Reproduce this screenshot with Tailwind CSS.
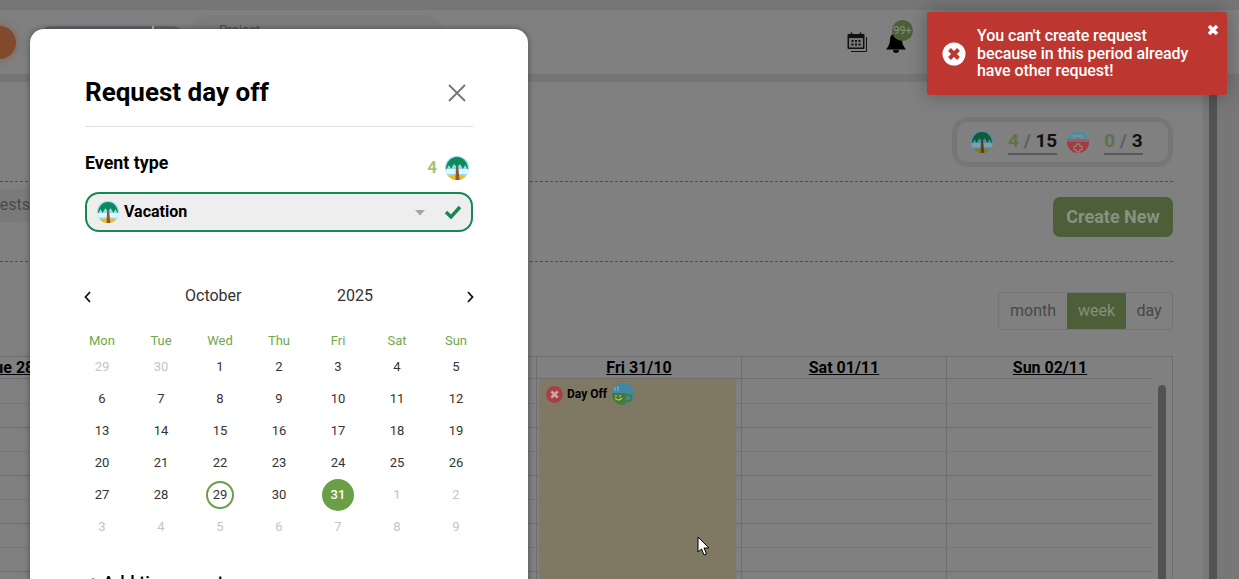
<!DOCTYPE html>
<html>
<head>
<meta charset="utf-8">
<script src="https://cdn.jsdelivr.net/npm/@tailwindcss/browser@4"></script>
</head>
<body class="m-0 font-['Roboto',sans-serif]">
<div class="relative w-[1239px] h-[579px] overflow-hidden bg-[#808080]">

  <!-- dimmed page: header -->
  <div class="h-[10px] bg-[#767676]"></div>
  <div class="h-[64px] bg-[#808080] flex items-center relative">
    <div class="w-[33px] h-[33px] rounded-full bg-[#824a2c] shadow-[0_0_8px_rgba(130,74,44,0.6)] -ml-[17px]"></div>
    <div class="absolute left-[37px] top-[16px] w-[150px] h-[30px] rounded-full bg-[#63656c]">
      <div class="absolute left-[115px] top-0 w-[2px] h-[30px] bg-[#b5b5b5]"></div>
    </div>
    <div class="absolute left-[190px] top-[5px] w-[254px] h-[50px] rounded-[20px] bg-[#7b7b7b]">
      <span class="absolute left-[29px] top-[7px] text-[13px] leading-[15px] text-[#4c4c4c]">Project</span>
    </div>
    <div class="ml-auto flex items-center mr-[333px] gap-[19px]">
      <svg width="20" height="20" viewBox="0 0 20 20"><rect x="0.500" y="2" width="17" height="15" fill="#111" rx="1"/><rect x="2" y="6" width="14" height="9.500" fill="#777"/><path d="M4.500 0.500v3M13.500 0.500v3" stroke="#111" stroke-width="1.500"/><path d="M4.500 8h2v2h-2zM8 8h2v2H8zM11.500 8h2v2h-2zM4.500 11.500h2v2h-2zM8 11.500h2v2H8zM11.500 11.500h2v2h-2z" fill="#111"/><path d="M19.500 5v14.500H4" fill="none" stroke="#111" stroke-width="1"/></svg>
      <div class="relative w-[20px] h-[20px] mt-[2px]">
        <svg width="20" height="20" viewBox="0 0 20 20" class="absolute left-0 top-0"><path d="M10 0c3.500 0 6 3 6 6.500 0 4.500 1.500 7 4 10H0c2.500-3 4-5.500 4-10C4 3 6.500 0 10 0z" fill="#000"/><path d="M7 17h6a3 3 0 0 1-6 0z" fill="#000"/></svg>
        <div class="absolute left-[6px] -top-[13px] w-[21px] h-[21px] rounded-full bg-[#4d5f38] flex items-center justify-center text-[11px] leading-[21px] text-[#879280] whitespace-nowrap">99+</div>
      </div>
    </div>
  </div>
  <div class="h-[8px] bg-[#767676]"></div>

  <!-- right page gutter and scrollbar -->
  <div class="absolute left-[1203px] right-0 top-[82px] bottom-0 bg-[#777777] pl-[6px]">
    <div class="w-[8px] h-full bg-[#525252]"></div>
  </div>

  <!-- dimmed page: content -->
  <div class="ml-[-30px] w-[1203px] pt-[35px]">
    <div class="flex justify-end h-[50px]">
      <div class="flex items-center w-[221px] h-[50px] rounded-[16px] border-[5px] border-[#767676] pl-[14px] text-[19px] font-bold text-[#111]">
        <svg width="22" height="22" viewBox="0 0 24 24"><defs><clipPath id="pa"><circle cx="12" cy="12" r="12"/></clipPath></defs><g clip-path="url(#pa)"><rect width="24" height="24" fill="#4d8da0"/><rect y="13" width="24" height="5" fill="#7fa0a8"/><ellipse cx="12" cy="24" rx="13" ry="5" fill="#94790f"/></g><path d="M11 8h2l1.500 16h-4z" fill="#5a3d2c"/><path d="M1 14C1 6 6 1 12 1s11 5 11 13l-3-5-2 4-3-5-3 3-3-3-3 5-2-4z" fill="#0b5c3d"/></svg>
        <span class="ml-[15px] mt-[1px] border-b-[2px] border-[#595959] leading-[22px] pb-[1px]"><span class="text-[#5f7249]">4</span><span class="text-[#56606a]"> / </span>15</span>
        <svg width="22" height="22" viewBox="0 0 22 22" class="ml-[10px]"><defs><clipPath id="pb"><circle cx="11" cy="11" r="11"/></clipPath></defs><g clip-path="url(#pb)"><rect width="22" height="22" fill="#4d8da0"/><path d="M7 8V5h8v3" fill="none" stroke="#8a8a8a" stroke-width="2"/><rect x="0" y="8" width="22" height="14" rx="3" fill="#a43a3c"/><rect x="0" y="8" width="22" height="3" fill="#8a6468"/><path d="M11 12.500v9M6.500 17h9" stroke="#8f8f8f" stroke-width="4.500"/><path d="M11 13.500v7M7.500 17h7" stroke="#a43a3c" stroke-width="2.500"/></g></svg>
        <span class="ml-[15px] mt-[1px] border-b-[2px] border-[#595959] leading-[22px] pb-[1px]"><span class="text-[#5f7249]">0</span><span class="text-[#56606a]"> / </span>3</span>
      </div>
    </div>
    <div class="mt-[14px] border-t border-dashed border-[#4d4d4d] h-[80px] flex items-start justify-between">
      <div class="mt-[7px] w-[60px] h-[33px] bg-[#7a7a7a] text-[#4a4a4a] text-[16px] leading-[31px] text-right overflow-hidden">ests</div>
      <div class="mt-[15px] w-[120px] h-[40px] pb-[2px] rounded-[7px] bg-[#4d5f38] text-[#879280] text-[18px] font-bold flex items-center justify-center">Create New</div>
    </div>
    <div class="border-t border-dashed border-[#4d4d4d] h-[31px]"></div>
    <div class="flex justify-end">
      <div class="flex h-[38px] rounded-[4px] border border-[#747474] text-[16px] text-[#484848] leading-[36px]">
        <div class="w-[68px] text-center">month</div>
        <div class="w-[59px] text-center bg-[#4d5f38] text-[#858f7c]">week</div>
        <div class="w-[46px] text-center">day</div>
      </div>
    </div>
    <!-- calendar week view -->
    <div class="relative mt-[26px] ml-[30px] border-t border-r border-[#6e6e6e] h-[230px]">
      <div class="flex h-[22px] border-b border-[#6e6e6e] text-[16px] font-bold text-black leading-[21px] underline w-[1153px]">
        <div class="w-[61px] text-left overflow-hidden whitespace-nowrap -ml-[15px] flex-none">Tue 28/10</div>
        <div class="flex-1"></div>
        <div class="w-[205px] text-center border-l border-[#6e6e6e] flex-none">Fri 31/10</div>
        <div class="w-[205px] text-center border-l border-[#6e6e6e] flex-none">Sat 01/11</div>
        <div class="w-[207px] text-center border-l border-[#6e6e6e] flex-none">Sun 02/11</div>
      </div>
      <div class="w-[1153px]">
        <div class="h-[25px] border-b border-dotted border-[#6e6e6e]"></div>
        <div class="h-[24px] border-b border-[#6e6e6e]"></div>
        <div class="h-[24px] border-b border-dotted border-[#6e6e6e]"></div>
        <div class="h-[24px] border-b border-[#6e6e6e]"></div>
        <div class="h-[24px] border-b border-dotted border-[#6e6e6e]"></div>
        <div class="h-[24px] border-b border-[#6e6e6e]"></div>
        <div class="h-[24px] border-b border-dotted border-[#6e6e6e]"></div>
        <div class="h-[24px] border-b border-[#6e6e6e]"></div>
      </div>
      <div class="absolute left-[741px] top-0 bottom-0 w-px bg-[#6e6e6e]"></div>
      <div class="absolute left-[946px] top-0 bottom-0 w-px bg-[#6e6e6e]"></div>
      <div class="absolute left-[536px] top-0 bottom-0 w-px bg-[#6e6e6e]"></div>
      <div class="absolute left-[1158px] top-[28px] bottom-0 w-[8px] rounded-t-[4px] bg-[#525252]"></div>
      <div class="absolute left-[539px] top-[22px] w-[197px] h-[210px] bg-[#7f7963] flex items-start pt-[7px] pl-[7px]">
        <svg width="17" height="17" viewBox="0 0 16 16"><circle cx="8" cy="8" r="8" fill="#a54048"/><path d="M5 5l6 6M11 5l-6 6" stroke="#cfa9a9" stroke-width="2.400"/></svg>
        <span class="ml-[4px] text-[12px] leading-[17px] font-bold text-black">Day Off</span>
        <svg width="22" height="22" viewBox="0 0 22 22" class="ml-[5px] -mt-[3px]"><defs><clipPath id="cf"><circle cx="11" cy="11" r="11"/></clipPath></defs><g clip-path="url(#cf)"><rect width="22" height="22" fill="#3f88a6"/><path d="M0 10h14v8a4 4 0 0 1-4 4H0z" fill="#4c7a2c"/><path d="M14 12h2.500a2.500 2.500 0 0 1 0 6H14" fill="none" stroke="#4c7a2c" stroke-width="2"/><path d="M3 15q3 4 7 0" fill="none" stroke="#a8c890" stroke-width="1.200"/><path d="M4 12v2M8 12v2" stroke="#a8c890" stroke-width="1.200"/><path d="M3 4v4M6 3v5" stroke="#8fb8c8" stroke-width="1"/></g></svg>
      </div>
    </div>
  </div>

  <!-- mouse cursor -->
  <svg width="14" height="20" viewBox="0 0 14 20" class="absolute left-[697px] top-[536px]"><path d="M1 1v15l3.500-3 2.500 6 2.500-1-2.500-6h5z" fill="#fff" stroke="#000" stroke-width="1"/></svg>

  <!-- modal -->
  <div class="absolute left-[30px] top-[29px] w-[498px] h-[600px] bg-white rounded-[14px] shadow-[0_0_6px_rgba(0,0,0,0.4)] px-[55px]">
    <div class="flex items-center justify-between h-[98px] border-b border-[#dfdfe8] pt-[28px]">
      <h2 class="text-[26px] leading-[30px] font-bold text-black">Request day off</h2>
      <svg width="18" height="18" viewBox="0 0 18 18" class="mr-[7px] mt-[2px]"><path d="M1 1l16 16M17 1L1 17" stroke="#757575" stroke-width="1.800"/></svg>
    </div>
    <div class="flex justify-between items-start h-[65px] pt-[26px]">
      <span class="text-[17.800px] leading-[20px] font-bold text-black">Event type</span>
      <div class="flex items-center gap-[8px] mr-[4px] pt-[2px]">
        <span class="text-[17px] font-bold text-[#9fc67f]">4</span>
        <svg width="24" height="24" viewBox="0 0 24 24"><defs><clipPath id="c1"><circle cx="12" cy="12" r="12"/></clipPath></defs><g clip-path="url(#c1)"><rect width="24" height="24" fill="#8fdcf3"/><rect y="13" width="24" height="5" fill="#e4f6fb"/><ellipse cx="12" cy="24" rx="13" ry="5" fill="#fbb90f"/></g><path d="M11 8h2l1.500 16h-4z" fill="#8a5a3c"/><path d="M1 14C1 6 6 1 12 1s11 5 11 13l-3-5-2 4-3-5-3 3-3-3-3 5-2-4z" fill="#0e8a5a"/></svg>
      </div>
    </div>
    <div class="flex items-center w-[388px] h-[40px] rounded-[14px] border-2 border-[#198754] bg-[#eeeeee] pl-[10px]">
      <svg width="22" height="22" viewBox="0 0 24 24"><defs><clipPath id="c2"><circle cx="12" cy="12" r="12"/></clipPath></defs><g clip-path="url(#c2)"><rect width="24" height="24" fill="#8fdcf3"/><rect y="13" width="24" height="5" fill="#e4f6fb"/><ellipse cx="12" cy="24" rx="13" ry="5" fill="#fbb90f"/></g><path d="M11 8h2l1.500 16h-4z" fill="#8a5a3c"/><path d="M1 14C1 6 6 1 12 1s11 5 11 13l-3-5-2 4-3-5-3 3-3-3-3 5-2-4z" fill="#0e8a5a"/></svg>
      <span class="ml-[5px] text-[16px] font-bold text-black">Vacation</span>
      <svg width="12" height="7" viewBox="0 0 12 7" class="ml-auto"><path d="M1 1h10L6 6.500z" fill="#a3a3a3"/></svg>
      <svg width="18" height="14" viewBox="0 0 18 14" class="ml-[18px] mr-[9px]"><path d="M2 7l5 5 9-10" fill="none" stroke="#198754" stroke-width="3.400"/></svg>
    </div>

    <!-- date picker -->
    <div class="-mx-[12px] mt-[49px]">
      <div class="flex items-center justify-between h-[30px] px-[11px] text-[16px] text-[#333]">
        <svg width="7" height="12" viewBox="0 0 7 12" class="mt-[1px]"><path d="M6 1L1.500 6 6 11" fill="none" stroke="#111" stroke-width="1.800"/></svg>
        <div class="flex justify-between w-[188px]"><span>October</span><span>2025</span></div>
        <svg width="7" height="12" viewBox="0 0 7 12" class="mt-[2px]"><path d="M1 1l4.500 5L1 11" fill="none" stroke="#111" stroke-width="1.800"/></svg>
      </div>
      <div class="grid grid-cols-7 w-[413px] -ml-[0.500px] mt-[20px] text-center text-[13px] text-[#6fa84c] leading-[20px]">
        <div>Mon</div><div>Tue</div><div>Wed</div><div>Thu</div><div>Fri</div><div>Sat</div><div>Sun</div>
      </div>
      <div class="grid grid-cols-7 w-[413px] -ml-[0.500px] auto-rows-[32px] text-[13px] text-[#333] items-center justify-items-center">
        <div class="text-[#c4c4c4]">29</div><div class="text-[#c4c4c4]">30</div><div>1</div><div>2</div><div>3</div><div>4</div><div>5</div>
        <div>6</div><div>7</div><div>8</div><div>9</div><div>10</div><div>11</div><div>12</div>
        <div>13</div><div>14</div><div>15</div><div>16</div><div>17</div><div>18</div><div>19</div>
        <div>20</div><div>21</div><div>22</div><div>23</div><div>24</div><div>25</div><div>26</div>
        <div>27</div><div>28</div><div class="w-[28px] h-[28px] rounded-full border-2 border-[#6a9f45] flex items-center justify-center">29</div><div>30</div><div class="w-[32px] h-[32px] rounded-full bg-[#6a9f45] text-white font-medium flex items-center justify-center">31</div><div class="text-[#c4c4c4]">1</div><div class="text-[#c4c4c4]">2</div>
        <div class="text-[#c4c4c4]">3</div><div class="text-[#c4c4c4]">4</div><div class="text-[#c4c4c4]">5</div><div class="text-[#c4c4c4]">6</div><div class="text-[#c4c4c4]">7</div><div class="text-[#c4c4c4]">8</div><div class="text-[#c4c4c4]">9</div>
      </div>
    </div>
    <div class="mt-[30px] ml-[3px] text-[18px] font-medium text-black leading-[20px]">+ Add time event</div>
  </div>

  <!-- toast -->
  <div class="absolute left-[927px] top-[12px] w-[300px] h-[83px] rounded-[3px] bg-[#bd362f] shadow-[0_0_20px_rgba(0,0,0,0.3)] flex items-center text-white">
    <svg width="24" height="24" viewBox="0 0 24 24" class="ml-[15px] flex-none"><circle cx="12" cy="12" r="11.500" fill="#fff"/><path d="M7.500 7.500l9 9M16.500 7.500l-9 9" stroke="#bd362f" stroke-width="4"/></svg>
    <p class="ml-[11px] w-[225px] text-[16px] tracking-[-0.07px] leading-[17.500px] font-medium">You can't create request because in this period already have other request!</p>
    <svg width="12" height="12" viewBox="0 0 12 12" class="absolute right-[8px] top-[12px]"><path d="M2 2l8 8M10 2l-8 8" stroke="#fff" stroke-width="3.600"/></svg>
  </div>
</div>
</body>
</html>
